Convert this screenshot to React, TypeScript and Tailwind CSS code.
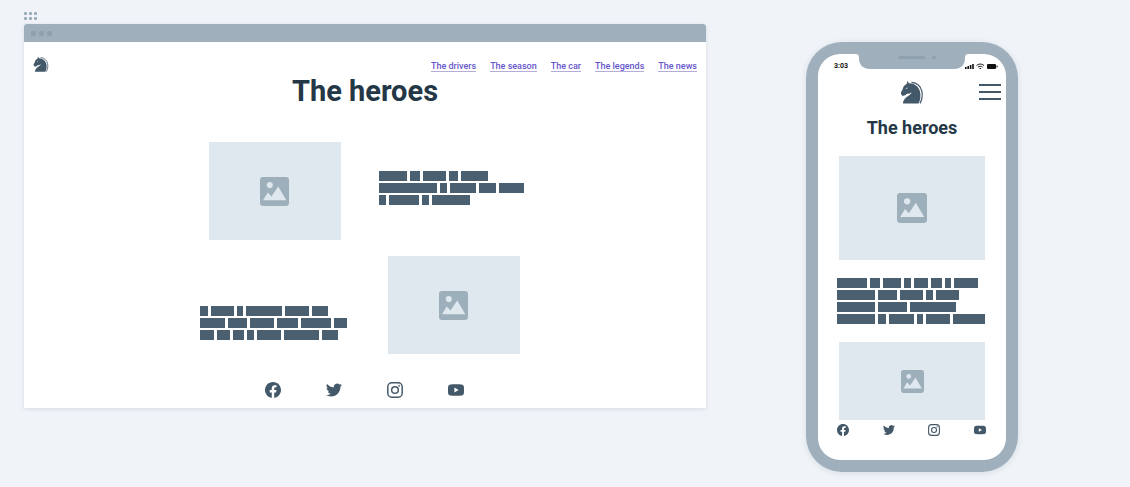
import React from "react";

type TextLines = number[][];

const driversText: TextLines = [
  [28, 10, 23, 9, 27],
  [58, 7, 26, 17, 25],
  [7, 30, 7, 38],
];

const seasonText: TextLines = [
  [8, 23, 6, 36, 24, 16],
  [25, 19, 24, 21, 30, 13],
  [14, 13, 11, 7, 24, 35, 16],
];

const phoneText: TextLines = [
  [30, 10, 18, 7, 14, 11, 6, 24],
  [38, 19, 23, 7, 23],
  [38, 29, 46],
  [38, 8, 25, 6, 24, 32],
];

const links = ["The drivers", "The season", "The car", "The legends", "The news"];

function BlockText({ lines }: { lines: TextLines }) {
  return (
    <div className="flex flex-col gap-0.5" aria-hidden="true">
      {lines.map((words, i) => (
        <div key={i} className="flex gap-[3px]">
          {words.map((width, j) => (
            <span key={j} className="h-2.5 bg-[#4a5f70]" style={{ width }} />
          ))}
        </div>
      ))}
    </div>
  );
}

function Picture({ className, icon }: { className: string; icon: string }) {
  return (
    <div className={`flex items-center justify-center bg-[#dfe7ef] ${className}`}>
      <svg viewBox="0 0 86 86" className={icon} role="img" aria-label="Picture">
        <rect width="86" height="86" rx="9" fill="#9eafbc" />
        <circle cx="29" cy="24" r="9" fill="#dfe7ef" />
        <path d="M9 69 23 46l11 12L54 28l24 41Z" fill="#dfe7ef" />
      </svg>
    </div>
  );
}

function HorseLogo({ className }: { className: string }) {
  return (
    <svg viewBox="0 0 24 24" className={className} role="img" aria-label="Home">
      <path
        fill="#435869"
        d="M7.600 .8 8.800 3.200C14.200 3 18.400 6.200 19.900 11.200c1.100 4.200 .6 8.800-1.400 12.300H3c0-3.700 2.800-6.300 5.900-8.100 1.400-.9 2.300-1.900 2.700-3.200-1.500 1.300-3.200 1.600-4.700 1.500L5 15.600l-1-.4-1.100 1L1.200 14.600.9 12.600C2 10.800 2.800 9.200 3.200 7.400c.6-1.600 1.900-2.600 3.400-3.400Z"
      />
      <path
        d="M11.500 2.300c5.500 .4 9.300 4.100 10.400 9 .8 4.200 .1 8.400-1.900 12.100"
        fill="none"
        stroke="#435869"
        strokeWidth="1.200"
      />
      <path d="m5.400 8.500 2.300-1.100-.6 1.300Z" fill="#fff" />
    </svg>
  );
}

const socials = [
  {
    name: "Facebook",
    path: "M24 12.073C24 5.405 18.627 0 12 0S0 5.405 0 12.073C0 18.100 4.388 23.094 10.125 24v-8.437H7.078v-3.490h3.047V9.413c0-3.026 1.792-4.697 4.533-4.697 1.312 0 2.686.236 2.686.236v2.971H15.830c-1.491 0-1.956.930-1.956 1.886v2.264h3.328l-.532 3.490h-2.796V24C19.612 23.094 24 18.100 24 12.073Z",
  },
  {
    name: "Twitter",
    path: "M23.950 4.570a10 10 0 0 1-2.820.77 4.960 4.960 0 0 0 2.160-2.720c-.95.550-2 .950-3.130 1.180a4.920 4.920 0 0 0-8.380 4.480C7.690 8.090 4.070 6.130 1.640 3.160a4.920 4.920 0 0 0 1.520 6.570 4.900 4.900 0 0 1-2.230-.61v.06a4.920 4.920 0 0 0 3.950 4.830 5 5 0 0 1-2.210.08 4.940 4.940 0 0 0 4.600 3.420A9.870 9.870 0 0 1 0 19.540 13.990 13.990 0 0 0 7.550 21.750c9.050 0 14-7.500 14-13.980 0-.21 0-.42-.02-.63a9.940 9.940 0 0 0 2.420-2.570Z",
  },
  { name: "Instagram", path: "" },
  {
    name: "YouTube",
    path: "M3.500 3.800C6 3.300 18 3.300 20.500 3.800 23 4.300 23.800 6 23.900 8c.15 2.500.15 5.500 0 8-.1 2-.9 3.700-3.400 4.200-2.500.5-14.500.5-17 0C1 19.700.2 18 .1 16c-.15-2.500-.15-5.500 0-8 .1-2 .9-3.700 3.400-4.200ZM9.600 8.300v7.400l6.400-3.700Z",
  },
];

function SocialLinks({ className, icon }: { className: string; icon: string }) {
  return (
    <div className={`flex ${className}`}>
      {socials.map(({ name, path }) => (
        <a key={name} href="#" aria-label={name} className="block">
          <svg viewBox="0 0 24 24" className={icon} fill="#435869" fillRule="evenodd">
            {path ? (
              <path d={path} />
            ) : (
              <g fill="none" stroke="#435869" strokeWidth="2.200">
                <rect x="1.200" y="1.200" width="21.600" height="21.600" rx="6" />
                <circle cx="12" cy="12" r="5" />
                <circle cx="18.300" cy="5.700" r=".4" />
              </g>
            )}
          </svg>
        </a>
      ))}
    </div>
  );
}

function DesktopWindow() {
  return (
    <section className="min-w-0 flex-1">
      <div className="grid w-fit grid-cols-3 gap-0.5 pb-1">
        {[0, 1, 2, 3, 4, 5].map((n) => (
          <span key={n} className="size-[3px] rounded-[1px] bg-[#9aabb9]" />
        ))}
      </div>
      <div className="overflow-hidden rounded-t-[3px] bg-white shadow-[0_1px_4px_rgba(60,80,110,0.14)]">
        <div className="flex h-[18px] items-center gap-[3px] bg-[#9fafbc] px-[7px]">
          <span className="size-[5px] rounded-[1px] bg-[#8fa1af]" />
          <span className="size-[5px] rounded-[1px] bg-[#8fa1af]" />
          <span className="size-[5px] rounded-[1px] bg-[#8fa1af]" />
        </div>
        <header className="flex h-[30px] items-end justify-between px-[9px]">
          <HorseLogo className="size-4" />
          <nav className="flex gap-3.5">
            {links.map((label) => (
              <a
                key={label}
                href="#"
                className="border-b border-[#b5acd9] text-[9px] leading-[10px] font-medium text-[#6656cb]"
              >
                {label}
              </a>
            ))}
          </nav>
        </header>
        <h1 className="text-center text-[29px] leading-[38px] font-bold text-[#243746]">The heroes</h1>
        <div className="flex flex-col items-center pr-0.5">
          <div className="mt-8 grid w-[358px] grid-cols-2 gap-y-4">
            <Picture className="h-[98px] w-[132px] justify-self-center" icon="size-[29px]" />
            <div className="w-[150px] justify-self-center pt-[29px]">
              <BlockText lines={driversText} />
            </div>
            <div className="w-[150px] self-end justify-self-center pb-3.5">
              <BlockText lines={seasonText} />
            </div>
            <Picture className="h-[98px] w-[132px] justify-self-center" icon="size-[29px]" />
          </div>
          <SocialLinks className="mt-7 gap-[45px] pb-2.5" icon="size-4" />
        </div>
      </div>
    </section>
  );
}

function StatusIcons() {
  return (
    <svg viewBox="0 0 33 7" className="h-[7px] w-[33px]" aria-hidden="true">
      <g fill="#111">
        <rect x="0" y="4" width="1.600" height="2" />
        <rect x="2.400" y="3" width="1.600" height="3" />
        <rect x="4.800" y="2" width="1.600" height="4" />
        <rect x="7.200" y="1" width="1.600" height="5" />
        <rect x="22" y="1" width="9" height="5" rx="1" />
        <rect x="31.500" y="2.500" width="1" height="2" />
      </g>
      <g fill="none" stroke="#111" strokeWidth="1">
        <path d="M11.500 2.600c2.200-2 5.300-2 7.500 0M13 4.200c1.400-1.200 3.100-1.200 4.500 0" />
        <path d="M14.500 5.600h1.500" />
      </g>
    </svg>
  );
}

function Phone() {
  return (
    <section className="mt-[30px] w-[212px] shrink-0 rounded-[36px] bg-[#9fafbc] p-3 shadow-[0_1px_6px_rgba(60,80,110,0.14)]">
      <div className="overflow-hidden rounded-[22px] bg-white pb-6">
        <div className="grid h-6 grid-cols-[1fr_106px_1fr] items-center">
          <span className="pl-4 text-[7px] leading-none font-bold text-[#111]">3:03</span>
          <svg viewBox="0 0 112 16" className="-mx-[3px] h-4 w-28 self-start" aria-hidden="true">
            <path d="M0 0h112q-3 0-3 4c0 7-4 11-11 11H14C7 15 3 11 3 4q0-4-3-4Z" fill="#9fafbc" />
            <rect x="42" y="2" width="27" height="3" rx="1.500" fill="#8fa1af" />
            <circle cx="78" cy="3.500" r="2" fill="#8fa1af" />
          </svg>
          <StatusIcons />
        </div>
        <header className="grid h-7 grid-cols-[1fr_auto_1fr] items-center px-[5px]">
          <span />
          <HorseLogo className="size-6" />
          <button type="button" aria-label="Open menu" className="flex flex-col gap-[5px] justify-self-end">
            <span className="h-0.5 w-[22px] bg-[#435869]" />
            <span className="h-0.5 w-[22px] bg-[#435869]" />
            <span className="h-0.5 w-[22px] bg-[#435869]" />
          </button>
        </header>
        <h2 className="mt-3 text-center text-[18px] leading-5 font-bold text-[#243746]">The heroes</h2>
        <Picture className="mx-[21px] mt-[18px] h-[104px]" icon="size-[30px]" />
        <div className="mt-[18px] pl-[19px]">
          <BlockText lines={phoneText} />
        </div>
        <Picture className="mx-[21px] mt-[18px] h-[78px]" icon="size-[23px]" />
        <SocialLinks className="mt-1 justify-between pr-5 pl-[19px]" icon="size-3" />
      </div>
    </section>
  );
}

export default function App() {
  return (
    <main className="flex min-h-screen items-start gap-[100px] bg-[#f0f4f8] pt-3 pr-28 pb-4 pl-6 font-[Roboto,sans-serif]">
      <DesktopWindow />
      <Phone />
    </main>
  );
}
